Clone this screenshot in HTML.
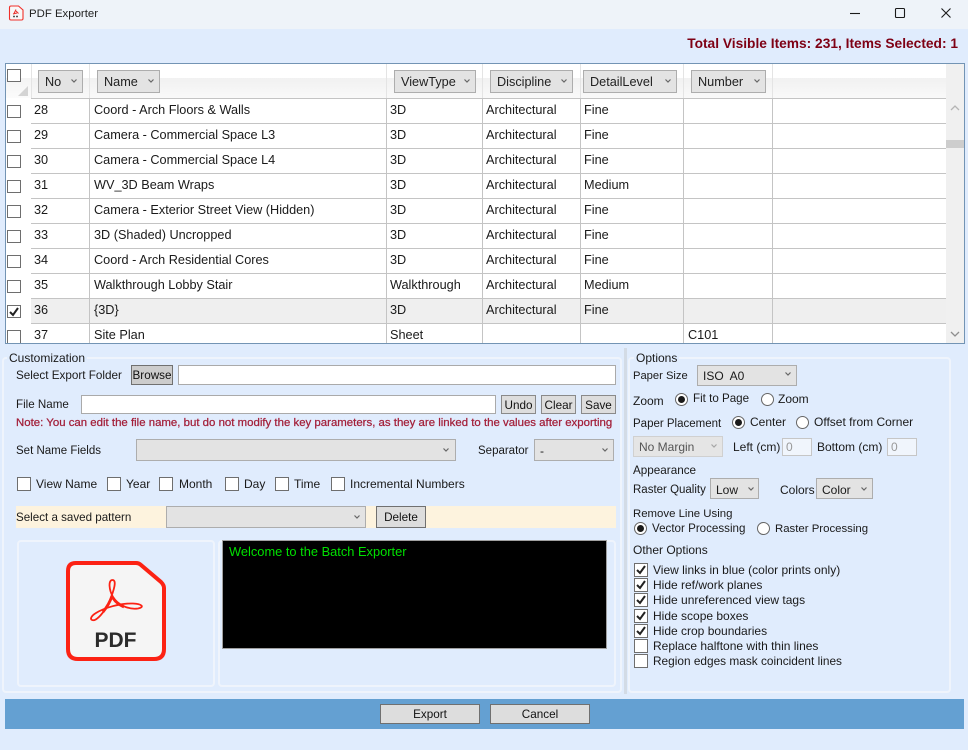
<!DOCTYPE html>
<html><head><meta charset="utf-8"><style>
html,body{margin:0;padding:0}
body{width:968px;height:750px;overflow:hidden;position:relative;background:#e0ecfd;font-family:"Liberation Sans",sans-serif;font-size:12px;color:#1a1a1a}
div,span,svg{position:absolute;box-sizing:border-box}
.t{white-space:nowrap;height:16px;line-height:16px}
.g{font-size:12.7px;color:#1a1a1a}
.vl{width:1px;top:99px;height:244px;background:#c4c4c4}
.hs{width:1px;top:64px;height:34px;background:#e4e4e4}
.hl{height:1px;left:31px;width:915px;background:#c4c4c4}
.cb{width:14px;height:14px;background:#fff;border:1px solid #6e6e6e}
.cb svg{left:0;top:0}
.gc{height:13px}
.hb{top:70px;height:23px;background:#e3e3e3;border:1px solid #adadad;line-height:22px;font-size:12.7px;padding-left:6px;color:#222}
.chev{width:6px;height:4px}
.btn{background:#dddddd;border:1px solid #8a8a8a;text-align:center;line-height:20px;color:#111;font-size:11.7px}
.inp{background:#fff;border:1px solid #aaa}
.sel{background:#e3e3e3;border:1px solid #adadad}
.rd{width:13px;height:13px;border-radius:50%;background:#fff;border:1px solid #666}
.rd.on:after{content:"";position:absolute;left:2px;top:2px;width:7px;height:7px;border-radius:50%;background:#1a1a1a}
.gb{border:2px solid #eff4fc;border-radius:4px}
.leg{background:#e0ecfd;padding:0 2px}
</style></head><body>
<svg width="0" height="0" style="left:0;top:0"><defs>
<path id="ck" d="M2 6 L5 9 L10 2" fill="none" stroke="#222" stroke-width="2"/>
<path id="ch" d="M0.5 0.5 L3 3 L5.5 0.5" fill="none" stroke="#666" stroke-width="1.2"/>
</defs></svg>

<!-- Title bar -->
<div style="left:0;top:0;width:968px;height:29px;background:#eef3f9"></div>
<svg style="left:8px;top:5px" width="16" height="16" viewBox="0 0 16 16"><path d="M1.5 2.5 Q1.5 1 3 1 L10.5 1 L15 5 L15 13.5 Q15 15 13.5 15 L3 15 Q1.5 15 1.5 13.5 Z" fill="#f8f8f8" stroke="#f0302a" stroke-width="1.1"/><path d="M8 4.5 L6 8.5 M8 6 L10.5 8.5 M5 9 L9 8" stroke="#e8302a" stroke-width="1" fill="none"/><path d="M5 11.5 H11" stroke="#555" stroke-width="1.6" stroke-dasharray="2 1"/></svg>
<span class="t" style="left:29px;top:6px;font-size:11.4px;color:#222">PDF Exporter</span>
<svg style="left:845px;top:4px" width="115" height="20" viewBox="0 0 115 20" fill="none" stroke="#1a1a1a" stroke-width="1.1"><path d="M5 9.5 H15"/><rect x="50.5" y="4.5" width="9" height="9" rx="1"/><path d="M96.5 4.5 L105.5 13.5 M105.5 4.5 L96.5 13.5"/></svg>

<span class="t" style="right:10px;top:36px;font-size:13.75px;font-weight:bold;color:#7e0014">Total Visible Items: 231, Items Selected: 1</span>

<!-- Grid -->
<div style="left:5px;top:63px;width:960px;height:281px;background:#fff;border:1px solid #7394b4"></div>
<div style="left:31px;top:78px;width:915px;height:20px;background:linear-gradient(#f1f1f1,#f9f9f9)"></div>
<div style="left:6px;top:78px;width:25px;height:20px;background:linear-gradient(#f4f4f4,#fbfbfb)"></div>
<div style="left:31px;top:98px;width:915px;height:1px;background:#c4c4c4"></div>
<div style="left:31px;top:299px;width:915px;height:24px;background:#efefef"></div>
<div class="hl" style="top:123px"></div><div class="hl" style="top:148px"></div><div class="hl" style="top:173px"></div><div class="hl" style="top:198px"></div><div class="hl" style="top:223px"></div><div class="hl" style="top:248px"></div><div class="hl" style="top:273px"></div><div class="hl" style="top:298px"></div><div class="hl" style="top:323px"></div>
<div class="vl" style="left:89px"></div><div class="vl" style="left:386px"></div><div class="vl" style="left:482px"></div><div class="vl" style="left:580px"></div><div class="vl" style="left:683px"></div><div class="vl" style="left:772px"></div>
<div class="hs" style="left:31px"></div><div class="hs" style="left:89px"></div><div class="hs" style="left:386px"></div><div class="hs" style="left:482px"></div><div class="hs" style="left:580px"></div><div class="hs" style="left:683px"></div><div class="hs" style="left:772px"></div>
<div style="left:946px;top:64px;width:18px;height:279px;background:#f0f0f0"></div>
<div style="left:946px;top:140px;width:18px;height:8px;background:#cdcdcd"></div>
<svg style="left:950px;top:104px" width="10" height="8" viewBox="0 0 10 8"><path d="M1 6 L5 2 L9 6" fill="none" stroke="#b5b5b5" stroke-width="1.3"/></svg>
<svg style="left:950px;top:330px" width="10" height="8" viewBox="0 0 10 8"><path d="M1 2 L5 6 L9 2" fill="none" stroke="#8e8e8e" stroke-width="1.3"/></svg>

<div class="cb gc" style="left:7px;top:69px"></div>
<svg style="left:18px;top:86px" width="10" height="10"><path d="M10 0 V10 H0 Z" fill="#d4d4d4"/></svg>

<div class="hb" style="left:38px;width:45px">No</div><svg class="chev" style="left:71px;top:79px"><use href="#ch"/></svg>
<div class="hb" style="left:97px;width:63px">Name</div><svg class="chev" style="left:148px;top:79px"><use href="#ch"/></svg>
<div class="hb" style="left:394px;width:82px">ViewType</div><svg class="chev" style="left:464px;top:79px"><use href="#ch"/></svg>
<div class="hb" style="left:490px;width:83px">Discipline</div><svg class="chev" style="left:561px;top:79px"><use href="#ch"/></svg>
<div class="hb" style="left:583px;width:94px">DetailLevel</div><svg class="chev" style="left:665px;top:79px"><use href="#ch"/></svg>
<div class="hb" style="left:691px;width:75px">Number</div><svg class="chev" style="left:754px;top:79px"><use href="#ch"/></svg>

<!-- rows -->
<div class="cb gc" style="left:7px;top:105px"></div><span class="t g" style="left:34px;top:102px">28</span><span class="t g" style="left:94px;top:102px">Coord - Arch Floors &amp; Walls</span><span class="t g" style="left:390px;top:102px">3D</span><span class="t g" style="left:486px;top:102px">Architectural</span><span class="t g" style="left:584px;top:102px">Fine</span>
<div class="cb gc" style="left:7px;top:130px"></div><span class="t g" style="left:34px;top:127px">29</span><span class="t g" style="left:94px;top:127px">Camera - Commercial Space L3</span><span class="t g" style="left:390px;top:127px">3D</span><span class="t g" style="left:486px;top:127px">Architectural</span><span class="t g" style="left:584px;top:127px">Fine</span>
<div class="cb gc" style="left:7px;top:155px"></div><span class="t g" style="left:34px;top:152px">30</span><span class="t g" style="left:94px;top:152px">Camera - Commercial Space L4</span><span class="t g" style="left:390px;top:152px">3D</span><span class="t g" style="left:486px;top:152px">Architectural</span><span class="t g" style="left:584px;top:152px">Fine</span>
<div class="cb gc" style="left:7px;top:180px"></div><span class="t g" style="left:34px;top:177px">31</span><span class="t g" style="left:94px;top:177px">WV_3D Beam Wraps</span><span class="t g" style="left:390px;top:177px">3D</span><span class="t g" style="left:486px;top:177px">Architectural</span><span class="t g" style="left:584px;top:177px">Medium</span>
<div class="cb gc" style="left:7px;top:205px"></div><span class="t g" style="left:34px;top:202px">32</span><span class="t g" style="left:94px;top:202px">Camera - Exterior Street View (Hidden)</span><span class="t g" style="left:390px;top:202px">3D</span><span class="t g" style="left:486px;top:202px">Architectural</span><span class="t g" style="left:584px;top:202px">Fine</span>
<div class="cb gc" style="left:7px;top:230px"></div><span class="t g" style="left:34px;top:227px">33</span><span class="t g" style="left:94px;top:227px">3D (Shaded) Uncropped</span><span class="t g" style="left:390px;top:227px">3D</span><span class="t g" style="left:486px;top:227px">Architectural</span><span class="t g" style="left:584px;top:227px">Fine</span>
<div class="cb gc" style="left:7px;top:255px"></div><span class="t g" style="left:34px;top:252px">34</span><span class="t g" style="left:94px;top:252px">Coord - Arch Residential Cores</span><span class="t g" style="left:390px;top:252px">3D</span><span class="t g" style="left:486px;top:252px">Architectural</span><span class="t g" style="left:584px;top:252px">Fine</span>
<div class="cb gc" style="left:7px;top:280px"></div><span class="t g" style="left:34px;top:277px">35</span><span class="t g" style="left:94px;top:277px">Walkthrough Lobby Stair</span><span class="t g" style="left:390px;top:277px">Walkthrough</span><span class="t g" style="left:486px;top:277px">Architectural</span><span class="t g" style="left:584px;top:277px">Medium</span>
<div class="cb gc" style="left:7px;top:305px"><svg width="12" height="11"><use href="#ck"/></svg></div><span class="t g" style="left:34px;top:302px">36</span><span class="t g" style="left:94px;top:302px">{3D}</span><span class="t g" style="left:390px;top:302px">3D</span><span class="t g" style="left:486px;top:302px">Architectural</span><span class="t g" style="left:584px;top:302px">Fine</span>
<div style="left:6px;top:330px;width:25px;height:13px;overflow:hidden"><div class="cb" style="left:1px;top:0"></div></div><span class="t g" style="left:34px;top:327px">37</span><span class="t g" style="left:94px;top:327px">Site Plan</span><span class="t g" style="left:390px;top:327px">Sheet</span><span class="t g" style="left:688px;top:327px">C101</span>

<!-- Customization -->
<div class="gb" style="left:2px;top:357px;width:620px;height:336px"></div>
<span class="t leg" style="left:7px;top:350px">Customization</span>
<div style="left:624px;top:348px;width:3px;height:346px;background:#d3dbe5"></div>

<span class="t" style="left:16px;top:368px;font-size:11.7px">Select Export Folder</span>
<div class="btn" style="left:131px;top:365px;width:42px;height:20px;background:#cccccc;border-color:#707070">Browse</div>
<div class="inp" style="left:178px;top:365px;width:438px;height:20px"></div>
<span class="t" style="left:16px;top:397px;font-size:11.6px">File Name</span>
<div class="inp" style="left:81px;top:395px;width:415px;height:19px"></div>
<div class="btn" style="left:501px;top:395px;width:35px;height:19px">Undo</div>
<div class="btn" style="left:541px;top:395px;width:35px;height:19px">Clear</div>
<div class="btn" style="left:581px;top:395px;width:35px;height:19px">Save</div>
<span class="t" style="left:16px;top:415px;font-size:11.43px;color:#a3203a;-webkit-text-stroke:.25px #a3203a">Note: You can edit the file name, but do not modify the key parameters, as they are linked to the values after exporting</span>
<span class="t" style="left:16px;top:443px;font-size:11.5px">Set Name Fields</span>
<div class="sel" style="left:136px;top:439px;width:320px;height:22px"></div><svg class="chev" style="left:443px;top:448px"><use href="#ch"/></svg>
<span class="t" style="left:478px;top:443px;font-size:11.5px">Separator</span>
<div class="sel" style="left:534px;top:439px;width:80px;height:22px"></div><span class="t" style="left:540px;top:443px">-</span><svg class="chev" style="left:602px;top:448px"><use href="#ch"/></svg>

<div class="cb" style="left:17px;top:477px"></div><span class="t" style="left:36px;top:476px">View Name</span>
<div class="cb" style="left:107px;top:477px"></div><span class="t" style="left:126px;top:476px">Year</span>
<div class="cb" style="left:159px;top:477px"></div><span class="t" style="left:179px;top:476px">Month</span>
<div class="cb" style="left:225px;top:477px"></div><span class="t" style="left:244px;top:476px">Day</span>
<div class="cb" style="left:275px;top:477px"></div><span class="t" style="left:294px;top:476px">Time</span>
<div class="cb" style="left:331px;top:477px"></div><span class="t" style="left:350px;top:476px">Incremental Numbers</span>

<div style="left:16px;top:506px;width:600px;height:22px;background:#fdf3de"></div>
<span class="t" style="left:16px;top:510px;font-size:11.6px">Select a saved pattern</span>
<div class="sel" style="left:166px;top:506px;width:200px;height:22px"></div><svg class="chev" style="left:354px;top:515px"><use href="#ch"/></svg>
<div class="btn" style="left:376px;top:506px;width:50px;height:22px;border-color:#707070;line-height:21px">Delete</div>

<div class="gb" style="left:17px;top:540px;width:198px;height:147px"></div>
<div class="gb" style="left:218px;top:540px;width:398px;height:147px"></div>
<svg style="left:64px;top:559px" width="104" height="104" viewBox="64 559 104 104">
<path d="M76 563 H136 Q139 563 141 565 L161 582 Q164 585 164 588 V649 Q164 659 154 659 H78 Q68 659 68 649 V571 Q68 563 76 563 Z" fill="#f5f5f5" stroke="#fc2214" stroke-width="4"/>
<path d="M92 620 C96 622 105 612 110 600 C114 590 117 580 112.5 580 C108 580 109 590 113 597 C117 604 128 610 138 608.5 C145 607 142 604 133 603.5 C120 603 104 608 96 613 C91 616 90 619 92 620 Z" fill="none" stroke="#fc2214" stroke-width="1.8"/>
<path d="M103 612 C107 607 110 602 112 596 M113 598 C116 603 120 605 124 607" fill="none" stroke="#fc2214" stroke-width="2.8"/>
<text x="115.5" y="647" text-anchor="middle" font-family="Liberation Sans, sans-serif" font-weight="bold" font-size="21" fill="#2b2b2b">PDF</text>
</svg>
<div style="left:222px;top:540px;width:385px;height:109px;background:#000;border:1px solid #a0a0a0"></div>
<span class="t" style="left:229px;top:544px;color:#00e000;font-size:12.85px">Welcome to the Batch Exporter</span>

<!-- Options -->
<div class="gb" style="left:628px;top:357px;width:323px;height:336px"></div>
<span class="t leg" style="left:634px;top:350px">Options</span>
<span class="t" style="left:633px;top:368px;font-size:11.2px">Paper Size</span>
<div class="sel" style="left:697px;top:365px;width:100px;height:21px"></div><span class="t" style="left:703px;top:368px">ISO&nbsp; A0</span><svg class="chev" style="left:785px;top:372px"><use href="#ch"/></svg>
<span class="t" style="left:633px;top:393px">Zoom</span>
<div class="rd on" style="left:675px;top:393px"></div><span class="t" style="left:693px;top:391px;font-size:11.6px">Fit to Page</span>
<div class="rd" style="left:761px;top:393px"></div><span class="t" style="left:778px;top:391px">Zoom</span>
<span class="t" style="left:633px;top:416px;font-size:11.5px">Paper Placement</span>
<div class="rd on" style="left:732px;top:416px"></div><span class="t" style="left:750px;top:414px">Center</span>
<div class="rd" style="left:796px;top:416px"></div><span class="t" style="left:814px;top:414px">Offset from Corner</span>
<div class="sel" style="left:633px;top:436px;width:90px;height:21px;background:#e5e5e5;border-color:#d0d0d0"></div><span class="t" style="left:639px;top:439px;color:#555">No Margin</span><svg class="chev" style="left:711px;top:444px;opacity:.5"><use href="#ch"/></svg>
<span class="t" style="left:733px;top:439px">Left (cm)</span>
<div style="left:782px;top:438px;width:30px;height:18px;background:#f0f5fc;border:1px solid #c6c6c6"></div><span class="t" style="left:786px;top:439px;color:#999">0</span>
<span class="t" style="left:817px;top:439px">Bottom (cm)</span>
<div style="left:887px;top:438px;width:30px;height:18px;background:#f0f5fc;border:1px solid #c6c6c6"></div><span class="t" style="left:891px;top:439px;color:#999">0</span>
<span class="t" style="left:633px;top:463px;font-size:11.7px">Appearance</span>
<span class="t" style="left:633px;top:482px;font-size:11.5px">Raster Quality</span>
<div class="sel" style="left:710px;top:478px;width:49px;height:21px"></div><span class="t" style="left:716px;top:482px">Low</span><svg class="chev" style="left:748px;top:487px"><use href="#ch"/></svg>
<span class="t" style="left:780px;top:482px">Colors</span>
<div class="sel" style="left:816px;top:478px;width:57px;height:21px"></div><span class="t" style="left:822px;top:482px">Color</span><svg class="chev" style="left:861px;top:487px"><use href="#ch"/></svg>
<span class="t" style="left:633px;top:506px;font-size:11.4px">Remove Line Using</span>
<div class="rd on" style="left:634px;top:522px"></div><span class="t" style="left:652px;top:521px;font-size:11.6px">Vector Processing</span>
<div class="rd" style="left:757px;top:522px"></div><span class="t" style="left:775px;top:521px;font-size:11.4px">Raster Processing</span>
<span class="t" style="left:633px;top:542px">Other Options</span>
<div class="cb" style="left:634px;top:563px"><svg width="12" height="12"><use href="#ck"/></svg></div><span class="t" style="left:653px;top:562px">View links in blue (color prints only)</span>
<div class="cb" style="left:634px;top:578px"><svg width="12" height="12"><use href="#ck"/></svg></div><span class="t" style="left:653px;top:577px">Hide ref/work planes</span>
<div class="cb" style="left:634px;top:593px"><svg width="12" height="12"><use href="#ck"/></svg></div><span class="t" style="left:653px;top:592px">Hide unreferenced view tags</span>
<div class="cb" style="left:634px;top:609px"><svg width="12" height="12"><use href="#ck"/></svg></div><span class="t" style="left:653px;top:608px">Hide scope boxes</span>
<div class="cb" style="left:634px;top:624px"><svg width="12" height="12"><use href="#ck"/></svg></div><span class="t" style="left:653px;top:623px">Hide crop boundaries</span>
<div class="cb" style="left:634px;top:639px"></div><span class="t" style="left:653px;top:638px">Replace halftone with thin lines</span>
<div class="cb" style="left:634px;top:654px"></div><span class="t" style="left:653px;top:653px;font-size:11.85px">Region edges mask coincident lines</span>

<!-- Footer -->
<div style="left:5px;top:699px;width:959px;height:30px;background:#64a0d2"></div>
<div class="btn" style="left:380px;top:704px;width:100px;height:20px;border-color:#707070">Export</div>
<div class="btn" style="left:490px;top:704px;width:100px;height:20px;border-color:#707070">Cancel</div>
</body></html>
